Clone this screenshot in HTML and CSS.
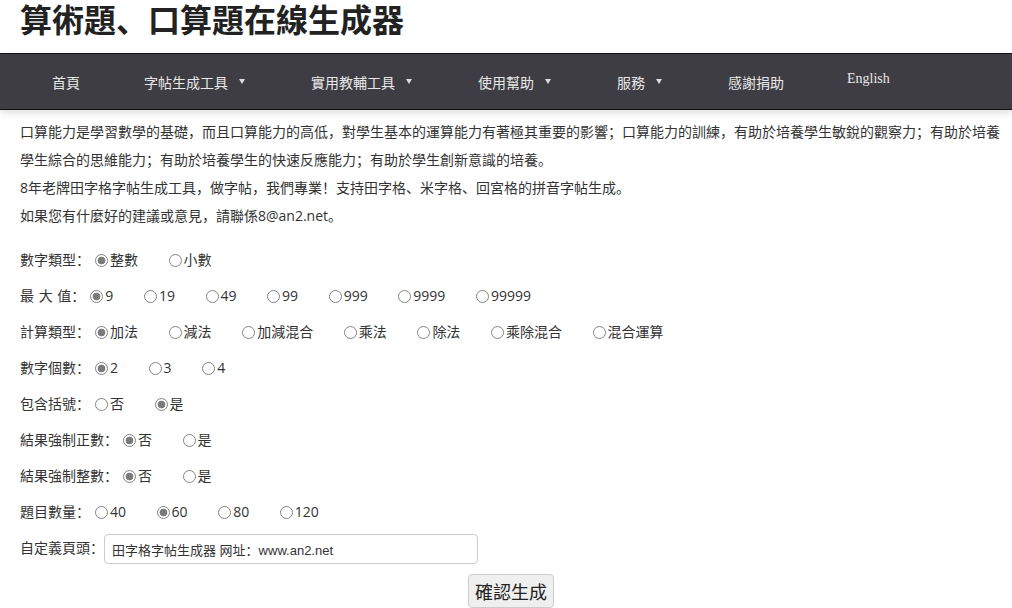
FILE: index.html
```html
<!DOCTYPE html>
<html lang="zh-CN">
<head>
    <meta charset="UTF-8">
    <meta name="viewport" content="width=device-width, initial-scale=1.0">
    <title>算術題、口算題在線生成器</title>
    <link rel="stylesheet" href="styles.css">
</head>
<body>
    <h1 class="title">算術題、口算題在線生成器</h1>
    <div class="nav">
        <ul>
            <li><a href="#">首頁</a></li>
            <li><a href="#">字帖生成工具<span class="arrow"></span></a></li>
            <li><a href="#">實用教輔工具<span class="arrow"></span></a></li>
            <li><a href="#">使用幫助<span class="arrow"></span></a></li>
            <li><a href="#">服務<span class="arrow"></span></a></li>
            <li><a href="#">感謝捐助</a></li>
            <li class="en"><a href="#">English</a></li>
        </ul>
    </div>
    <div class="content">
        <p class="intro">口算能力是學習數學的基礎，而且口算能力的高低，對學生基本的運算能力有著極其重要的影響；口算能力的訓練，有助於培養學生敏銳的觀察力；有助於培養學生綜合的思維能力；有助於培養學生的快速反應能力；有助於學生創新意識的培養。<br>
        8年老牌田字格字帖生成工具，做字帖，我們專業！支持田字格、米字格、回宮格的拼音字帖生成。<br>
        如果您有什麼好的建議或意見，請聯係8@an2.net。</p>

        <form class="form">
            <div class="row">數字類型：<label><input type="radio" name="type" checked>整數</label><label><input type="radio" name="type">小數</label></div>
            <div class="row"><span class="spaced">最 大 值：</span><label><input type="radio" name="max" checked>9</label><label><input type="radio" name="max">19</label><label><input type="radio" name="max">49</label><label><input type="radio" name="max">99</label><label><input type="radio" name="max">999</label><label><input type="radio" name="max">9999</label><label><input type="radio" name="max">99999</label></div>
            <div class="row">計算類型：<label><input type="radio" name="op" checked>加法</label><label><input type="radio" name="op">減法</label><label><input type="radio" name="op">加減混合</label><label><input type="radio" name="op">乘法</label><label><input type="radio" name="op">除法</label><label><input type="radio" name="op">乘除混合</label><label><input type="radio" name="op">混合運算</label></div>
            <div class="row">數字個數：<label><input type="radio" name="count" checked>2</label><label><input type="radio" name="count">3</label><label><input type="radio" name="count">4</label></div>
            <div class="row">包含括號：<label><input type="radio" name="bracket">否</label><label><input type="radio" name="bracket" checked>是</label></div>
            <div class="row">結果強制正數：<label><input type="radio" name="positive" checked>否</label><label><input type="radio" name="positive">是</label></div>
            <div class="row">結果強制整數：<label><input type="radio" name="integer" checked>否</label><label><input type="radio" name="integer">是</label></div>
            <div class="row">題目數量：<label><input type="radio" name="num">40</label><label><input type="radio" name="num" checked>60</label><label><input type="radio" name="num">80</label><label><input type="radio" name="num">120</label></div>
            <div class="row">自定義頁頭：<input type="text" class="header-input" value="田字格字帖生成器 网址：www.an2.net"></div>
            <div class="submit-row"><button type="button" class="submit">確認生成</button></div>
        </form>
    </div>
</body>
</html>
```

FILE: styles.css
```css
body {
    margin: 0;
    font-family: "Open Sans", "Noto Sans CJK SC", sans-serif;
    font-size: 14px;
    color: #333;
    background: #fff;
}
.title {
    margin: 0;
    padding: 0 20px;
    font-family: "Noto Sans CJK SC", sans-serif;
    font-size: 32px;
    line-height: 36px;
    font-weight: bold;
    color: #222;
    height: 53px;
}
.nav {
    background: #3e3d43;
    border-top: 1px solid #111;
    border-bottom: 1px solid #111;
    height: 55px;
    box-shadow: 0 3px 7px rgba(0, 0, 0, 0.13);
}
.nav ul {
    list-style: none;
    margin: 0;
    padding: 0 0 0 19px;
    display: flex;
    align-items: center;
    height: 55px;
}
.nav li a {
    display: flex;
    align-items: center;
    padding: 0 33px;
    color: #e8e8e8;
    text-decoration: none;
    font-family: "Noto Sans CJK SC", sans-serif;
    font-size: 14px;
    line-height: 20px;
}
.nav li:nth-child(2) a {
    padding-left: 31px;
}
.nav .arrow {
    width: 0;
    height: 0;
    margin-left: 11px;
    border-left: 3px solid transparent;
    border-right: 3px solid transparent;
    border-top: 5px solid #ddd;
}
.nav li.en {
    padding-bottom: 6px;
}
.nav li.en a {
    padding-left: 30px;
    font-family: "Liberation Serif", serif;
}
.content {
    padding: 8px 10px 0 20px;
}
.intro {
    margin: 0;
    line-height: 28px;
}
.form {
    margin-top: 12px;
}
.row {
    height: 36px;
    line-height: 36px;
    white-space: nowrap;
}
.spaced {
    word-spacing: 1px;
}
.row label {
    margin-right: 25.6px;
}
.row input[type="radio"] {
    appearance: none;
    -webkit-appearance: none;
    width: 13px;
    height: 13px;
    margin: 0 2px 0 5px;
    border: 1px solid #858585;
    border-radius: 50%;
    background: #fff;
    vertical-align: -2px;
}
.row input[type="radio"]:checked {
    background: radial-gradient(circle, #7b7b7b 0, #7b7b7b 3.5px, #fff 4.2px);
}
.header-input {
    width: 374px;
    height: 30px;
    box-sizing: border-box;
    margin: 0;
    padding: 0 7px;
    border: 1px solid #ccc;
    border-radius: 4px;
    font-family: "Liberation Sans", "Noto Sans CJK SC", sans-serif;
    font-size: 13px;
    color: #333;
    vertical-align: middle;
}
.submit-row {
    text-align: center;
    margin-top: 8px;
}
.submit {
    font-family: "Noto Sans CJK SC", sans-serif;
    font-size: 18px;
    line-height: 24px;
    padding: 4px 6px;
    background: #efefef;
    border: 1px solid #ccc;
    border-radius: 4px;
    color: #222;
    cursor: pointer;
}
```
